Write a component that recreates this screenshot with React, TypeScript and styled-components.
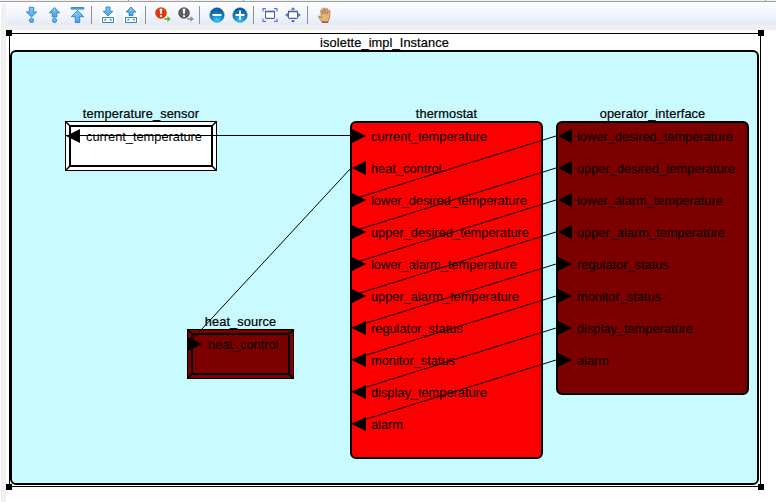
import React from "react";
import styled, { createGlobalStyle } from "styled-components";

const GlobalStyle = createGlobalStyle`
  * { box-sizing: border-box; }
  body { margin: 0; background: #fff; overflow: hidden; }
`;

const Editor = styled.div`
  width: 776px;
  height: 502px;
  display: grid;
  grid-template: 2px 28px 1fr / 6px 1fr;
  font: 12.8px "Liberation Sans", Arial, sans-serif;
  color: #000;
`;

const TabEdge = styled.div`
  grid-column: 1 / 3;
  display: grid;
  grid-template-columns: 129px 115px 522px 1fr;
  background: #f0f0f0;
  border-bottom: 1px solid #a0a0a0;
`;

const TabMark = styled.i`
  border-right: 1px solid #a0a0a0;
`;

const Gutter = styled.div`
  grid-row: 2 / 4;
  margin-top: 2px;
  background: #f0f0f0;
  border-left: 1px solid #fff;
`;

const ToolbarBand = styled.div`
  background: #f0f0f0;
  padding-bottom: 5px;
`;

const Toolbar = styled.div`
  height: 23px;
  display: flex;
  align-items: center;
  padding: 3px 0 0 17px;
  background: linear-gradient(#fdfdff, #f3f6fc 50%, #e4eaf6);
`;

const Tool = styled.svg<{ $gap?: number }>`
  flex: none;
  width: 16px;
  height: 18px;
  margin-right: ${(p) => p.$gap ?? 7}px;
  overflow: visible;
`;

const Separator = styled.i<{ $gap?: number }>`
  width: 1px;
  height: 18px;
  margin-right: ${(p) => p.$gap ?? 8}px;
  background: #8d9096;
`;

const Canvas = styled.main`
  position: relative;
  background: #fff;
`;

const Selection = styled.div`
  position: absolute;
  left: 3px;
  top: 3px;
  width: 752px;
  height: 454px;
  border: 1px solid #000;
`;

const Handle = styled.i<{ $x: "left" | "right"; $y: "top" | "bottom" }>`
  position: absolute;
  ${(p) => p.$x}: -4px;
  ${(p) => p.$y}: -4px;
  width: 6px;
  height: 6px;
  background: #000;
`;

const Title = styled.span<{ $lift?: number }>`
  position: absolute;
  left: 50%;
  bottom: calc(100% + ${(p) => p.$lift ?? 1}px);
  transform: translateX(-50%);
  line-height: 14px;
  white-space: nowrap;
  letter-spacing: 0.1px;
  -webkit-text-stroke: 0.2px #000;
`;

interface Box {
  $x: number;
  $y: number;
  $w: number;
  $h: number;
  $fill: string;
}

const Node = styled.section<Box>`
  position: absolute;
  left: ${(p) => p.$x}px;
  top: ${(p) => p.$y}px;
  width: ${(p) => p.$w}px;
  height: ${(p) => p.$h}px;
  background: ${(p) => p.$fill};
`;

const RoundedNode = styled(Node)`
  border: 2px solid #000;
  border-radius: 6px;
`;

const DeviceNode = styled(Node)`
  border: 1px solid #000;
`;

const Bevel = styled.svg`
  position: absolute;
  left: -1px;
  top: -1px;
`;

const Ports = styled.ul<{ $shift: number }>`
  position: relative;
  list-style: none;
  margin: ${(p) => p.$shift}px 0 0;
  padding: 0;
`;

const Port = styled.li`
  display: flex;
  align-items: center;
  height: 32px;
`;

const Arrow = styled.svg<{ $gap: number }>`
  flex: none;
  width: 14px;
  height: 14px;
  margin: 0 ${(p) => p.$gap}px 2px 0;
`;

const PortName = styled.span`
  line-height: 14px;
  white-space: nowrap;
`;

const Wires = styled.svg`
  position: absolute;
  left: -6px;
  top: -30px;
  width: 776px;
  height: 502px;
  pointer-events: none;
`;

type PortData = [name: string, dir: "in" | "out"];

interface PortListProps {
  ports: PortData[];
  shift?: number;
  gap?: number;
}

const PortList = ({ ports, shift = -2, gap = 5 }: PortListProps) => (
  <Ports $shift={shift}>
    {ports.map(([name, dir]) => (
      <Port key={name}>
        <Arrow $gap={gap} viewBox="0 0 14 14">
          <path d={dir === "in" ? "M0 0L14 7L0 14Z" : "M14 0L0 7L14 14Z"} />
        </Arrow>
        <PortName>{name}</PortName>
      </Port>
    ))}
  </Ports>
);

const DeviceFrame = ({ w, h }: { w: number; h: number }) => (
  <Bevel width={w} height={h} fill="none" stroke="#000">
    <rect x="5" y="5" width={w - 10} height={h - 10} strokeWidth="2" />
    <path
      d={`M0 0L5 5M${w} 0L${w - 5} 5M0 ${h}L5 ${h - 5}M${w} ${h}L${w - 5} ${h - 5}`}
      strokeWidth="1.5"
    />
  </Bevel>
);

const thermostatPorts: PortData[] = [
  ["current_temperature", "in"],
  ["heat_control", "out"],
  ["lower_desired_temperature", "in"],
  ["upper_desired_temperature", "in"],
  ["lower_alarm_temperature", "in"],
  ["upper_alarm_temperature", "in"],
  ["regulator_status", "out"],
  ["monitor_status", "out"],
  ["display_temperature", "out"],
  ["alarm", "out"],
];

const operatorPorts: PortData[] = [
  ["lower_desired_temperature", "out"],
  ["upper_desired_temperature", "out"],
  ["lower_alarm_temperature", "out"],
  ["upper_alarm_temperature", "out"],
  ["regulator_status", "in"],
  ["monitor_status", "in"],
  ["display_temperature", "in"],
  ["alarm", "in"],
];

const blue = { fill: "url(#sky)", stroke: "#2b82c4", strokeWidth: 0.9 };

const Globe = ({ plus }: { plus?: boolean }) => (
  <Tool viewBox="0 0 16 18" $gap={plus ? 6 : 7}>
    <circle cx="9" cy="9" r="7.2" fill="url(#globe)" stroke="#1768a5" strokeWidth=".6" />
    <path d={plus ? "M4.5 9h9M9 4.5v9" : "M4.5 9h9"} stroke="#fff" strokeWidth="2" />
  </Tool>
);

const Alert = ({ color, arrow, gap }: { color: string; arrow: string; gap?: number }) => (
  <Tool viewBox="0 0 16 18" $gap={gap}>
    <circle cx="7" cy="7" r="5.8" fill={color} />
    <path d="M5.6 2.8h2.8L7.7 8H6.3z" fill="#fff" />
    <circle cx="7" cy="10" r="1.1" fill="#fff" />
    <path d="M10 12h3.2V9.8L17.2 13l-4 3.2V14H10z" fill={arrow} stroke="#fff" strokeWidth=".4" />
  </Tool>
);

const ScreenFrame = () => (
  <>
    <rect x="3.5" y="5.5" width="9" height="7" rx=".5" fill="#fff" stroke="#4b5f9b" />
    <path d="M3 5.5h10" stroke="#4b5f9b" strokeWidth="1.6" />
    <path d="M4.5 11.5h7" stroke="#cbd7ef" />
  </>
);

const Tray = () => (
  <>
    <rect x="0" y="0" width="16" height="17" fill="#fff" />
    <rect x="2.5" y="11.5" width="11" height="5" fill="#fff" stroke="#3b83bd" />
    <path d="M4.5 14.5l1.6-1.5M10 13l1.6 1.5" stroke="#3b83bd" strokeWidth="1.2" />
  </>
);

const App = () => (
  <Editor>
    <GlobalStyle />
    <TabEdge>
      <TabMark />
      <TabMark />
      <TabMark />
    </TabEdge>
    <Gutter />
    <ToolbarBand>
      <Toolbar>
        <Tool viewBox="0 0 16 18">
          <defs>
            <linearGradient id="sky" x2="0" y2="1">
              <stop stopColor="#8cc8f4" />
              <stop offset="1" stopColor="#45a3ea" />
            </linearGradient>
            <radialGradient id="globe" cx=".5" cy=".9" r=".85">
              <stop stopColor="#35d2f5" />
              <stop offset=".55" stopColor="#0d82c7" />
              <stop offset="1" stopColor="#0c5697" />
            </radialGradient>
          </defs>
          <path d="M6.3 1.3h4.4v4.6h3L8.5 11 3.3 5.9h3z" {...blue} />
          <circle cx="8.5" cy="14.4" r="2.1" {...blue} />
        </Tool>
        <Tool viewBox="0 0 16 18">
          <path d="M6.3 11h4.4V6.7h3L8.5 1.4 3.3 6.7h3z" {...blue} />
          <circle cx="8.5" cy="14.4" r="2.1" {...blue} />
        </Tool>
        <Tool viewBox="0 0 16 18" $gap={6}>
          <path d="M2.2 1.5h12.6v1.6H2.2z" {...blue} />
          <path d="M6.3 16.5h4.4v-5.8h4L8.5 4.3l-6.2 6.4h4z" {...blue} />
        </Tool>
        <Separator />
        <Tool viewBox="0 0 16 18" $gap={7}>
          <Tray />
          <path d="M6 1h4v4.2h3L8 10 3 5.2h3z" {...blue} />
        </Tool>
        <Tool viewBox="0 0 16 18" $gap={6}>
          <Tray />
          <path d="M6 9.5h4V6h3L8 1 3 6h3z" {...blue} />
        </Tool>
        <Separator />
        <Alert color="#df3910" arrow="#62a839" />
        <Alert color="#5d5d5d" arrow="#8c8c8c" gap={6} />
        <Separator />
        <Globe />
        <Globe plus />
        <Separator />
        <Tool viewBox="0 0 16 18">
          <ScreenFrame />
          <path
            d="M1 5.5V2.7h3M12 2.7h3v2.8M1 12.5v2.8h3M12 15.3h3v-2.8"
            fill="none"
            stroke="#5278e6"
            strokeWidth="1.2"
          />
        </Tool>
        <Tool viewBox="0 0 16 18" $gap={6}>
          <ScreenFrame />
          <path
            d="M8 1.3l2.2 2.5H5.8zM8 16.7l2.2-2.5H5.8zM.3 9l2.5-2.3v4.6zM15.7 9l-2.5-2.3v4.6z"
            fill="#3c61d4"
          />
        </Tool>
        <Separator />
        <Tool viewBox="0 0 16 18">
          <path
            d="M6 16.5c0-2-3.6-4-3.4-6.1.8-.8 2 .2 2.8 1.4L4.7 4.4c.4-.8 1.3-.7 1.6 0l.8 3.4-.2-5.3c.4-.9 1.4-.8 1.7 0l.4 5.2.8-5c.4-.8 1.4-.6 1.6.2l-.2 5.3 1.3-3.8c.6-.7 1.4-.3 1.5.5l-.6 7.3c-.3 1.7-1.4 2.6-1.5 4.3z"
            fill="#e5b477"
            stroke="#a8713c"
            strokeWidth=".8"
          />
          <path d="M6 16h6" stroke="#98602e" strokeWidth="1.5" />
        </Tool>
      </Toolbar>
    </ToolbarBand>
    <Canvas>
      <RoundedNode $x={4} $y={20} $w={749} $h={435} $fill="#c8faff">
        <Title $lift={2}>isolette_impl_Instance</Title>
      </RoundedNode>
      <Selection>
        <Handle $x="left" $y="top" />
        <Handle $x="right" $y="top" />
        <Handle $x="left" $y="bottom" />
        <Handle $x="right" $y="bottom" />
      </Selection>
      <DeviceNode $x={59} $y={91} $w={152} $h={50} $fill="#fff">
        <DeviceFrame w={152} h={50} />
        <Title>temperature_sensor</Title>
        <PortList shift={-1} gap={6} ports={[["current_temperature", "out"]]} />
      </DeviceNode>
      <DeviceNode $x={181} $y={299} $w={107} $h={50} $fill="#7d0000">
        <DeviceFrame w={107} h={50} />
        <Title>heat_source</Title>
        <PortList shift={-1} gap={6} ports={[["heat_control", "in"]]} />
      </DeviceNode>
      <RoundedNode $x={344} $y={91} $w={193} $h={338} $fill="#fa0000">
        <Title $lift={2}>thermostat</Title>
        <PortList ports={thermostatPorts} />
      </RoundedNode>
      <RoundedNode $x={550} $y={91} $w={193} $h={274} $fill="#7d0000">
        <Title $lift={2}>operator_interface</Title>
        <PortList ports={operatorPorts} />
      </RoundedNode>
      <Wires viewBox="0 0 776 502" stroke="#000" fill="none">
        <path d="M66 135.5H351M351 168L188 344" />
        {operatorPorts.map(([name], i) => (
          <path key={name} d={`M557 ${135.7 + i * 32}L351 ${199.8 + i * 32}`} />
        ))}
      </Wires>
    </Canvas>
  </Editor>
);

export default App;
